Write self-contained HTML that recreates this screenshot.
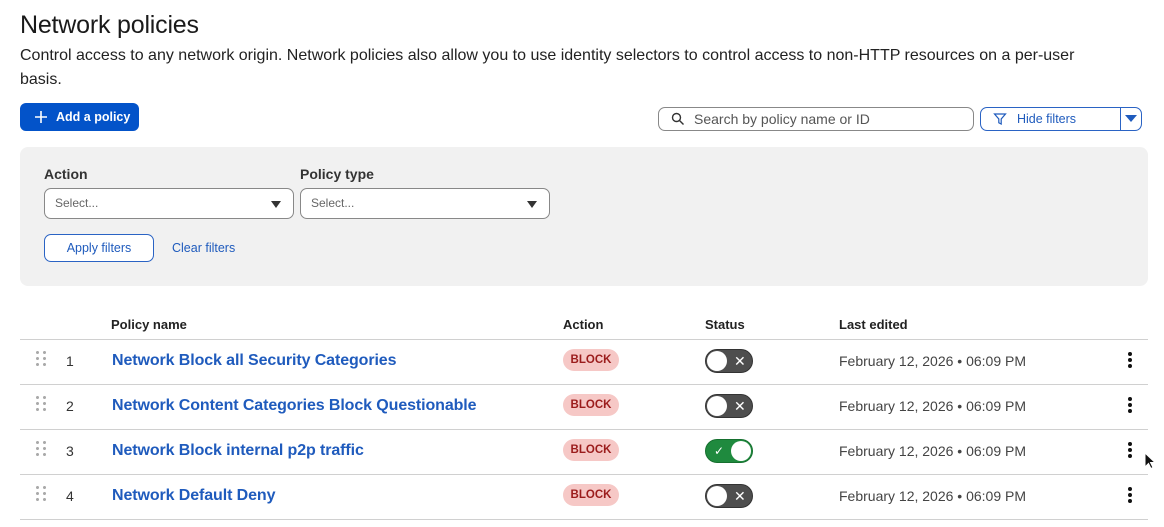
<!DOCTYPE html>
<html><head><style>
*{margin:0;padding:0;box-sizing:border-box}
body{width:1164px;height:527px;background:#fff;font-family:"Liberation Sans",sans-serif;color:#1f1f1f;position:relative;overflow:hidden}
.a{position:absolute;white-space:nowrap}
h1{position:absolute;left:20px;top:11px;font-size:25px;font-weight:normal;color:#1a1a1a;letter-spacing:-0.2px}
.desc{left:20px;top:44px;font-size:16px;line-height:24px;width:1100px;white-space:normal;color:#222;letter-spacing:0px}
.btn{left:20px;top:103px;width:119px;height:28px;background:#0353c9;border-radius:6px;color:#fff;font-size:12.5px;font-weight:bold;line-height:28px;padding-left:36px}
.search{left:658px;top:107px;width:316px;height:24px;border:1px solid #888;border-radius:7px;font-size:14px;color:#555;line-height:22px;padding-left:35px}
.hf{left:980px;top:107px;width:162px;height:24px;border:1px solid #2a63c4;border-radius:7px;color:#1f5bbd;font-size:12.5px;line-height:22px;padding-left:36px}
.panel{left:20px;top:147px;width:1128px;height:139px;background:#f1f1f1;border-radius:8px}
.lbl{font-size:14px;font-weight:bold;color:#333;top:166px}
.sel{top:188px;width:250px;height:31px;border:1px solid #888;border-radius:7px;background:#fff;font-size:12px;color:#666;line-height:29px;padding-left:10px}
.sel:after{content:"";position:absolute;right:12px;top:12px;border-left:5px solid transparent;border-right:5px solid transparent;border-top:7px solid #333}
.ap{left:44px;top:234px;width:110px;height:28px;border:1px solid #2a63c4;border-radius:7px;color:#1f5bbd;font-size:12.5px;line-height:26px;text-align:center;background:#fff}
.cf{left:172px;top:241px;font-size:12.5px;color:#1f5bbd}
.th{top:317px;font-size:13px;font-weight:bold;color:#222}
.line{left:20px;width:1128px;height:1px;background:#d0d0d0}
.num{left:66px;font-size:14px;color:#333}
.name{left:112px;font-size:16px;font-weight:bold;color:#1f5bbd;letter-spacing:-0.1px}
.badge{left:563px;width:56px;height:22px;background:#f6c8c6;border-radius:11px;color:#9b1c1c;font-size:11.5px;font-weight:bold;text-align:center;line-height:22px}
.tg{left:705px;width:48px;height:24px;border-radius:12px;background:#4e4e4e;border:1px solid #333}
.tg .k{position:absolute;left:1px;top:1px;width:20px;height:20px;border-radius:50%;background:#fff}
.tg .x{position:absolute;left:28px;top:0;color:#fff;font-size:14px;line-height:22px}
.tg.on{background:#1f8a3e;border-color:#16702f}
.tg.on .k{left:25px}
.tg.on .x{left:8px;font-size:12px}
.date{left:839px;font-size:14px;color:#444}
.dots{left:1128px;width:4px}
.dots i{display:block;width:4px;height:4px;border-radius:50%;background:#111;margin-bottom:2px}
.drag{left:36px;width:10px}
.drag i{display:block;width:10px;height:3px;margin-bottom:3px;background:radial-gradient(circle at 1.5px 1.5px,#aaa 1.4px,transparent 1.6px),radial-gradient(circle at 8.5px 1.5px,#aaa 1.4px,transparent 1.6px)}
</style></head><body>
<h1>Network policies</h1>
<div class="a desc">Control access to any network origin. Network policies also allow you to use identity selectors to control access to non-HTTP resources on a per-user basis.</div>
<div class="a btn">Add a policy</div>
<svg class="a" style="left:34px;top:110px" width="14" height="14"><path d="M7 1v12M1 7h12" stroke="#fff" stroke-width="1.6"/></svg>
<div class="a search">Search by policy name or ID</div>
<svg class="a" style="left:671px;top:112px" width="14" height="14"><circle cx="5.5" cy="5.5" r="4" fill="none" stroke="#333" stroke-width="1.4"/><path d="M8.5 8.5l4 4" stroke="#333" stroke-width="1.4"/></svg>
<div class="a hf">Hide filters</div>
<div class="a" style="left:1120px;top:107px;width:1px;height:24px;background:#2a63c4"></div>
<svg class="a" style="left:993px;top:112px" width="14" height="14"><path d="M1.5 2h11l-4.3 5v5l-2.4-1.2V7z" fill="none" stroke="#1f5bbd" stroke-width="1.2"/></svg>
<svg class="a" style="left:1125px;top:115px" width="12" height="8"><path d="M0 0h12L6 7z" fill="#1f5bbd"/></svg>
<div class="a panel"></div>
<div class="a lbl" style="left:44px">Action</div>
<div class="a lbl" style="left:300px">Policy type</div>
<div class="a sel" style="left:44px">Select...</div>
<div class="a sel" style="left:300px">Select...</div>
<div class="a ap">Apply filters</div>
<div class="a cf">Clear filters</div>
<div class="a th" style="left:111px">Policy name</div>
<div class="a th" style="left:563px">Action</div>
<div class="a th" style="left:705px">Status</div>
<div class="a th" style="left:839px">Last edited</div>
<div class="a line" style="top:339px"></div>
<div class="a line" style="top:384px"></div>
<div class="a line" style="top:429px"></div>
<div class="a line" style="top:474px"></div>
<div class="a line" style="top:519px"></div>

<div class="a drag" style="top:351px"><i></i><i></i><i></i></div>
<div class="a num" style="top:353px">1</div>
<div class="a name" style="top:352px">Network Block all Security Categories</div>
<div class="a badge" style="top:349px">BLOCK</div>
<div class="a tg" style="top:349px"><span class="k"></span><span class="x">✕</span></div>
<div class="a date" style="top:353px">February 12, 2026 • 06:09 PM</div>
<div class="a dots" style="top:352px"><i></i><i></i><i></i></div>

<div class="a drag" style="top:396px"><i></i><i></i><i></i></div>
<div class="a num" style="top:398px">2</div>
<div class="a name" style="top:397px">Network Content Categories Block Questionable</div>
<div class="a badge" style="top:394px">BLOCK</div>
<div class="a tg" style="top:394px"><span class="k"></span><span class="x">✕</span></div>
<div class="a date" style="top:398px">February 12, 2026 • 06:09 PM</div>
<div class="a dots" style="top:397px"><i></i><i></i><i></i></div>

<div class="a drag" style="top:441px"><i></i><i></i><i></i></div>
<div class="a num" style="top:443px">3</div>
<div class="a name" style="top:442px">Network Block internal p2p traffic</div>
<div class="a badge" style="top:439px">BLOCK</div>
<div class="a tg on" style="top:439px"><span class="k"></span><span class="x">✓</span></div>
<div class="a date" style="top:443px">February 12, 2026 • 06:09 PM</div>
<div class="a dots" style="top:442px"><i></i><i></i><i></i></div>
<svg class="a" style="left:1144px;top:452px" width="12" height="18"><path d="M1 1v14l3.5-3.5 2.5 5 2-1-2.5-5H11z" fill="#111" stroke="#fff" stroke-width="1"/></svg>

<div class="a drag" style="top:486px"><i></i><i></i><i></i></div>
<div class="a num" style="top:488px">4</div>
<div class="a name" style="top:487px">Network Default Deny</div>
<div class="a badge" style="top:484px">BLOCK</div>
<div class="a tg" style="top:484px"><span class="k"></span><span class="x">✕</span></div>
<div class="a date" style="top:488px">February 12, 2026 • 06:09 PM</div>
<div class="a dots" style="top:487px"><i></i><i></i><i></i></div>
</body></html>
